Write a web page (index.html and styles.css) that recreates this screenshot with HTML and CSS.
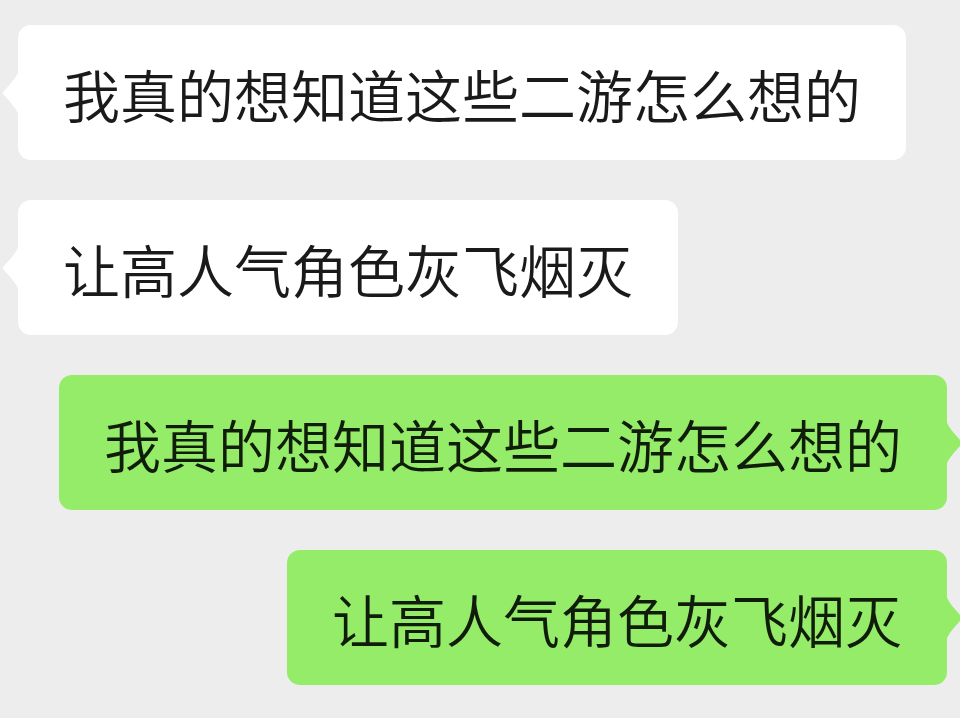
FILE: index.html
```html
<!DOCTYPE html>
<html lang="zh-CN">
<head>
<meta charset="utf-8">
<title>聊天</title>
<link rel="stylesheet" href="styles.css">
</head>
<body>
  <main class="chat">
    <div class="row row-in">
      <div class="bubble bubble-in">
        <svg class="tail tail-in" viewBox="0 0 18 46" width="18" height="46" aria-hidden="true">
          <path d="M18 0 C16 6 13 10 3 21 Q0.5 23 3 25 C13 36 16 40 18 46 Z" fill="#ffffff"/>
        </svg>
        我真的想知道这些二游怎么想的
      </div>
    </div>
    <div class="row row-in">
      <div class="bubble bubble-in">
        <svg class="tail tail-in" viewBox="0 0 18 46" width="18" height="46" aria-hidden="true">
          <path d="M18 0 C16 6 13 10 3 21 Q0.5 23 3 25 C13 36 16 40 18 46 Z" fill="#ffffff"/>
        </svg>
        让高人气角色灰飞烟灭
      </div>
    </div>
    <div class="row row-out">
      <div class="bubble bubble-out">
        我真的想知道这些二游怎么想的
        <svg class="tail tail-out" viewBox="0 0 18 46" width="18" height="46" aria-hidden="true">
          <path d="M0 0 C2 6 5 10 15 21 Q17.5 23 15 25 C5 36 2 40 0 46 Z" fill="#95ec69"/>
        </svg>
      </div>
    </div>
    <div class="row row-out">
      <div class="bubble bubble-out">
        让高人气角色灰飞烟灭
        <svg class="tail tail-out" viewBox="0 0 18 46" width="18" height="46" aria-hidden="true">
          <path d="M0 0 C2 6 5 10 15 21 Q17.5 23 15 25 C5 36 2 40 0 46 Z" fill="#95ec69"/>
        </svg>
      </div>
    </div>
  </main>
</body>
</html>
```
FILE: styles.css
```css
html, body {
  margin: 0;
  padding: 0;
  background: #ededed;
}

body {
  width: 960px;
  height: 718px;
  overflow: hidden;
  font-family: "Noto Sans CJK SC", "Noto Sans", sans-serif;
  color: #1a1a1a;
}

.chat {
  display: flex;
  flex-direction: column;
  gap: 40px;
  padding: 25px 13px 0 18px;
}

.row {
  display: flex;
}

.row-in {
  justify-content: flex-start;
}

.row-out {
  justify-content: flex-end;
}

.bubble {
  position: relative;
  box-sizing: border-box;
  height: 135px;
  padding: 31px 45px 0 45px;
  border-radius: 13px;
  font-size: 57px;
  font-weight: 350;
  line-height: 75px;
  white-space: nowrap;
}

.bubble-in {
  background: #ffffff;
}

.bubble-out {
  background: #95ec69;
  color: #111d0b;
}

.tail {
  position: absolute;
  top: 45px;
  display: block;
}

.tail-in {
  left: -17px;
}

.tail-out {
  right: -17px;
}
```
